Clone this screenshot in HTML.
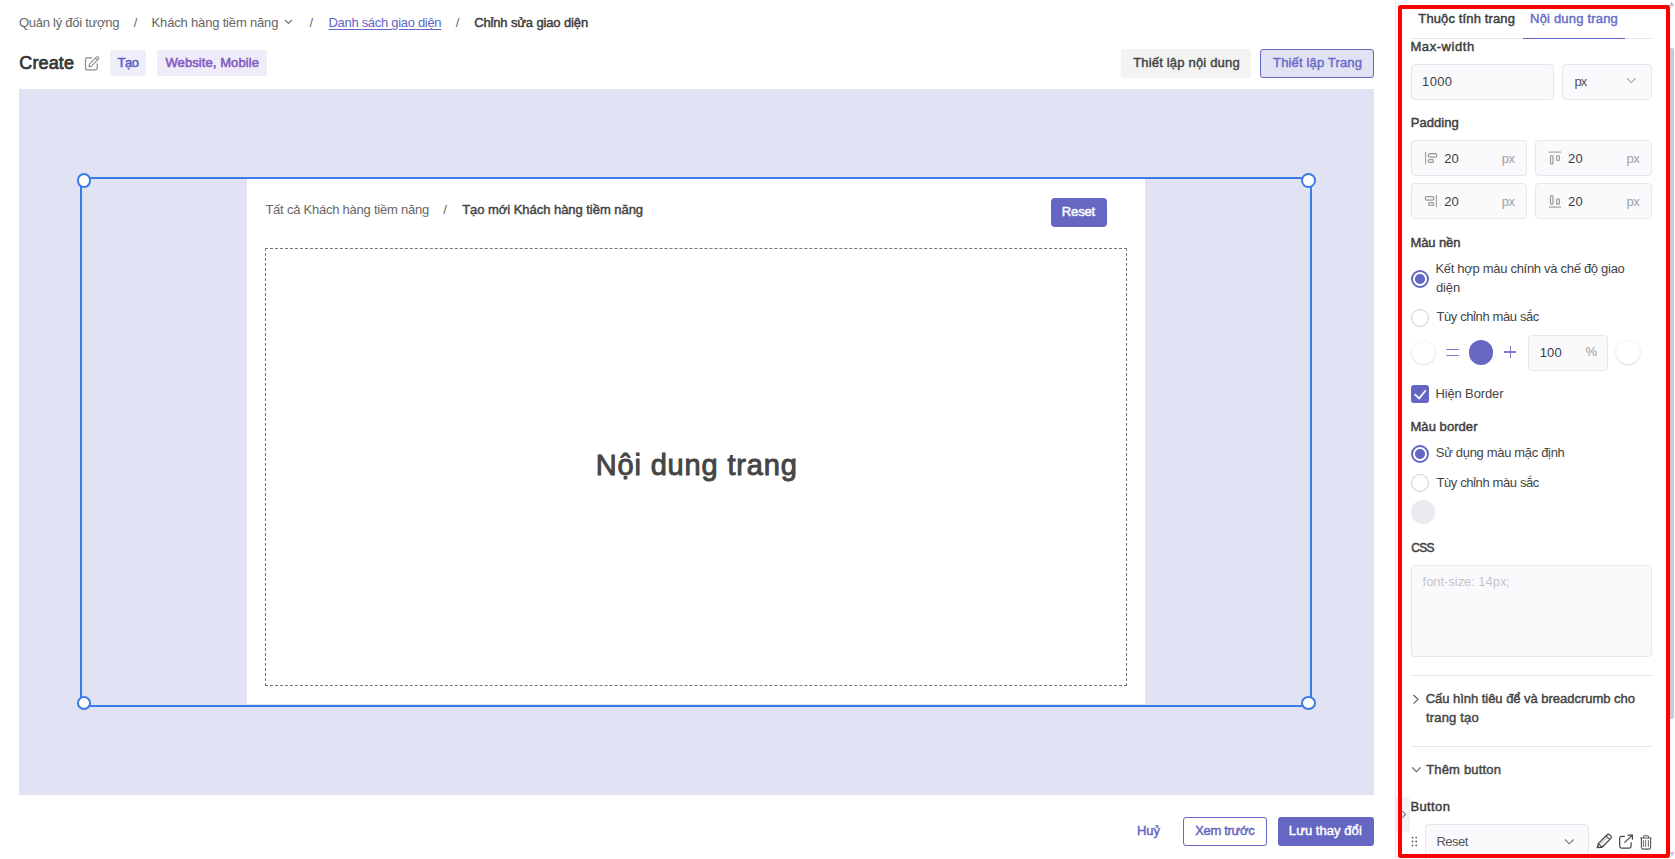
<!DOCTYPE html>
<html><head><meta charset="utf-8">
<style>
*{box-sizing:border-box;margin:0;padding:0}
html,body{width:1675px;height:859px;overflow:hidden;background:#fff}
body{position:relative;font-family:"Liberation Sans",sans-serif;color:#404040;font-size:13px}
.t{position:absolute;white-space:nowrap;line-height:1}
.s{position:absolute}
</style></head><body>
<!-- breadcrumb chevron -->
<svg class="s" style="left:284px;top:19px" width="9" height="6" viewBox="0 0 9 6"><path d="M1 1 L4.5 4.5 L8 1" fill="none" stroke="#777" stroke-width="1.2"/></svg>
<!-- edit icon -->
<svg class="s" style="left:84px;top:55px" width="17" height="17" viewBox="0 0 17 17"><path d="M8.2 2.8 H3.1 a1.6 1.6 0 0 0 -1.6 1.6 V13.2 a1.6 1.6 0 0 0 1.6 1.6 H11.6 a1.6 1.6 0 0 0 1.6 -1.6 V8.6" fill="none" stroke="#8a8a8a" stroke-width="1.2"/><path d="M4.9 11.9 L5.5 9.2 L12.5 2.2 a1.35 1.35 0 0 1 1.95 1.95 L7.5 11.2 Z M11.5 3.2 L13.45 5.15" fill="none" stroke="#8a8a8a" stroke-width="1.1" stroke-linejoin="round"/></svg>
<div class="s" style="left:110px;top:50px;width:36px;height:26px;background:#eeeef8;border-radius:3px"></div>
<div class="s" style="left:157px;top:50px;width:110px;height:26px;background:#efebf8;border-radius:3px"></div>
<div class="s" style="left:1121px;top:49px;width:130px;height:29px;background:#f3f3f3;border-radius:3px"></div>
<div class="s" style="left:1260px;top:49px;width:114px;height:29px;background:#e1e2f3;border:1px solid #6567c3;border-radius:3px"></div>
<!-- canvas -->
<div class="s" style="left:19px;top:89px;width:1355px;height:706px;background:#e1e2f3"></div>
<div class="s" style="left:247px;top:179px;width:898px;height:525px;background:#fff"></div>
<div class="s" style="left:80px;top:177px;width:1232px;height:530px;border:2px solid #3d7be6"></div>
<div class="s" style="left:76.7px;top:173.1px;width:14.3px;height:14.8px;border:2px solid #3d7be6;border-radius:50%;background:#fff"></div>
<div class="s" style="left:1301.1px;top:173.1px;width:14.8px;height:14.8px;border:2px solid #3d7be6;border-radius:50%;background:#fff"></div>
<div class="s" style="left:76.7px;top:695.9px;width:14.3px;height:14px;border:2px solid #3d7be6;border-radius:50%;background:#fff"></div>
<div class="s" style="left:1301.1px;top:695.9px;width:14.8px;height:14px;border:2px solid #3d7be6;border-radius:50%;background:#fff"></div>
<div class="s" style="left:1051px;top:198px;width:56px;height:29px;background:#6567c3;border-radius:4px"></div>
<div class="s" style="left:265px;top:248px;width:862px;height:438px;border:1px dashed #777"></div>
<!-- bottom buttons -->
<div class="s" style="left:1183px;top:817px;width:84px;height:29px;border:1px solid #6567c3;border-radius:3px"></div>
<div class="s" style="left:1278px;top:817px;width:96px;height:29px;background:#6567c3;border-radius:3px"></div>
<!-- right panel -->
<div class="s" style="left:1395px;top:0;width:1px;height:859px;background:#e8e8ee"></div>
<!-- tabs -->
<div class="s" style="left:1411px;top:38px;width:241px;height:1px;background:#e6e6ee"></div>
<div class="s" style="left:1523px;top:37.8px;width:102px;height:1.4px;background:#5f62c4"></div>
<!-- max-width -->
<div class="s" style="left:1411px;top:64px;width:143px;height:36px;background:#fafafd;border:1px solid #e6e6ee;border-radius:4px"></div>
<div class="s" style="left:1562px;top:64px;width:90px;height:36px;background:#fafafd;border:1px solid #e6e6ee;border-radius:4px"></div>
<svg class="s" style="left:1626px;top:77px" width="11" height="8" viewBox="0 0 11 8"><path d="M1 1.3 L5.2 5.6 L9.4 1.3" fill="none" stroke="#777" stroke-width="1"/></svg>
<!-- padding boxes -->
<div class="s" style="left:1411px;top:140px;width:116px;height:36px;background:#fafafd;border:1px solid #e6e6ee;border-radius:4px"></div>
<div class="s" style="left:1535px;top:140px;width:117px;height:36px;background:#fafafd;border:1px solid #e6e6ee;border-radius:4px"></div>
<div class="s" style="left:1411px;top:183px;width:116px;height:36px;background:#fafafd;border:1px solid #e6e6ee;border-radius:4px"></div>
<div class="s" style="left:1535px;top:183px;width:117px;height:36px;background:#fafafd;border:1px solid #e6e6ee;border-radius:4px"></div>
<!-- padding icons -->
<svg class="s" style="left:1423px;top:151px" width="16" height="15" viewBox="0 0 16 15"><path d="M2.6 1 V13.3" stroke="#a3a3a3" stroke-width="1.2"/><rect x="5.4" y="2.7" width="8.3" height="3.4" rx="1.2" fill="none" stroke="#999" stroke-width="1.2"/><rect x="5.4" y="8.6" width="5" height="2.8" rx="1" fill="none" stroke="#999" stroke-width="1.2"/></svg>
<svg class="s" style="left:1547px;top:151px" width="16" height="15" viewBox="0 0 16 15"><path d="M1.8 1.1 H14.1" stroke="#a3a3a3" stroke-width="1.2"/><rect x="3.5" y="4.5" width="2.5" height="8.6" rx="1" fill="none" stroke="#999" stroke-width="1.2"/><rect x="9.6" y="4.5" width="2.8" height="5" rx="1" fill="none" stroke="#999" stroke-width="1.2"/></svg>
<svg class="s" style="left:1423px;top:194px" width="16" height="15" viewBox="0 0 16 15"><path d="M13.4 1 V13.3" stroke="#a3a3a3" stroke-width="1.2"/><rect x="2.3" y="2.7" width="8.3" height="3.4" rx="1.2" fill="none" stroke="#999" stroke-width="1.2"/><rect x="5.6" y="8.6" width="5" height="2.8" rx="1" fill="none" stroke="#999" stroke-width="1.2"/></svg>
<svg class="s" style="left:1547px;top:194px" width="16" height="15" viewBox="0 0 16 15"><path d="M1.8 13.1 H14.1" stroke="#a3a3a3" stroke-width="1.2"/><rect x="3.5" y="1.6" width="2.5" height="8.6" rx="1" fill="none" stroke="#999" stroke-width="1.2"/><rect x="9.6" y="4.8" width="2.8" height="5.4" rx="1" fill="none" stroke="#999" stroke-width="1.2"/></svg>
<!-- radios mau nen -->
<div class="s" style="left:1411px;top:269.7px;width:18px;height:18px;border:2px solid #6466c4;border-radius:50%"></div>
<div class="s" style="left:1415.2px;top:274.2px;width:9.6px;height:9.6px;background:#6466c4;border-radius:50%"></div>
<div class="s" style="left:1411px;top:308.7px;width:18px;height:18px;border:1.5px solid #cfcfcf;border-radius:50%;background:#fff"></div>
<!-- color row -->
<div class="s" style="left:1411.5px;top:340.5px;width:23.5px;height:23.5px;border-radius:50%;background:#fff;box-shadow:0 0.5px 2px rgba(0,0,0,0.22)"></div>
<div class="s" style="left:1446.4px;top:348.8px;width:12.3px;height:1.4px;background:#7b7dcc;border-radius:1px"></div>
<div class="s" style="left:1446.4px;top:355px;width:12.3px;height:1.4px;background:#7b7dcc;border-radius:1px"></div>
<div class="s" style="left:1469px;top:340.3px;width:24.3px;height:24.3px;border-radius:50%;background:#6668c4"></div>
<div class="s" style="left:1504.3px;top:351.4px;width:11.8px;height:1.3px;background:#7b7dcc"></div>
<div class="s" style="left:1509.5px;top:346.2px;width:1.3px;height:11.8px;background:#7b7dcc"></div>
<div class="s" style="left:1527.5px;top:335.4px;width:80px;height:35.2px;background:#fafafd;border:1px solid #e6e6ee;border-radius:4px"></div>
<div class="s" style="left:1616.3px;top:340.5px;width:23.5px;height:23.5px;border-radius:50%;background:#fff;box-shadow:0 0.5px 2px rgba(0,0,0,0.22)"></div>
<!-- checkbox -->
<div class="s" style="left:1411px;top:385px;width:18px;height:18px;background:#6466c4;border-radius:3px"></div>
<svg class="s" style="left:1411px;top:385px" width="18" height="18" viewBox="0 0 18 18"><path d="M3.6 9.2 L8.2 13.4 L14.8 5.2" fill="none" stroke="#fff" stroke-width="1.7"/></svg>
<!-- radios mau border -->
<div class="s" style="left:1411px;top:444.7px;width:18px;height:18px;border:2px solid #6466c4;border-radius:50%"></div>
<div class="s" style="left:1415.2px;top:449.2px;width:9.6px;height:9.6px;background:#6466c4;border-radius:50%"></div>
<div class="s" style="left:1411px;top:474.1px;width:18px;height:18px;border:1.5px solid #cfcfcf;border-radius:50%;background:#fff"></div>
<div class="s" style="left:1411px;top:500px;width:24px;height:24px;border-radius:50%;background:#e9e9ef"></div>
<!-- textarea -->
<div class="s" style="left:1411px;top:565px;width:241px;height:92px;background:#fafafd;border:1px solid #e6e6ee;border-radius:4px"></div>
<!-- dividers -->
<div class="s" style="left:1411px;top:675px;width:241px;height:1px;background:#e6e6ee"></div>
<svg class="s" style="left:1412px;top:694px" width="8" height="11" viewBox="0 0 8 11"><path d="M1.5 1 L6 5.3 L1.5 9.6" fill="none" stroke="#555" stroke-width="1.1"/></svg>
<div class="s" style="left:1411px;top:746px;width:241px;height:1px;background:#e6e6ee"></div>
<svg class="s" style="left:1411px;top:766px" width="11" height="8" viewBox="0 0 11 8"><path d="M1.2 1.4 L5.4 5.8 L9.6 1.4" fill="none" stroke="#555" stroke-width="1.1"/></svg>
<!-- collapse tab -->
<div class="s" style="left:1396px;top:797px;width:14px;height:35px;background:#f2f2f3;border-radius:0 4px 4px 0"></div>
<svg class="s" style="left:1401px;top:810px" width="7" height="9" viewBox="0 0 7 9"><path d="M1.4 1.2 L4.6 4.4 L1.4 7.6" fill="none" stroke="#777" stroke-width="1.1"/></svg>
<!-- button row -->
<svg class="s" style="left:1411px;top:836px" width="7" height="11" viewBox="0 0 7 11"><circle cx="1.6" cy="1.6" r="0.9" fill="#555"/><circle cx="5.2" cy="1.6" r="0.9" fill="#555"/><circle cx="1.6" cy="5.5" r="0.9" fill="#555"/><circle cx="5.2" cy="5.5" r="0.9" fill="#555"/><circle cx="1.6" cy="9.4" r="0.9" fill="#555"/><circle cx="5.2" cy="9.4" r="0.9" fill="#555"/></svg>
<div class="s" style="left:1424.5px;top:824.3px;width:164px;height:45px;background:#fafafd;border:1px solid #e6e6ee;border-radius:4px"></div>
<svg class="s" style="left:1564px;top:838px" width="11" height="8" viewBox="0 0 11 8"><path d="M1 1.5 L5.3 5.8 L9.6 1.5" fill="none" stroke="#777" stroke-width="1.1"/></svg>
<svg class="s" style="left:1596px;top:833px" width="17" height="17" viewBox="0 0 17 17"><path d="M1.2 14.6 L2.3 10.6 L11.2 1.7 a1.6 1.6 0 0 1 2.3 0 L14.9 3.1 a1.6 1.6 0 0 1 0 2.3 L6 14.3 Z M2.3 10.6 L6 14.3 M10 2.9 L13.7 6.6" fill="none" stroke="#444" stroke-width="1.25" stroke-linejoin="round"/><path d="M4.6 10.9 L11.1 4.4" stroke="#999" stroke-width="0.8"/><path d="M1.2 14.6 L1.8 12.5 L3.3 14 Z" fill="#444"/></svg>
<svg class="s" style="left:1618px;top:834px" width="16" height="16" viewBox="0 0 16 16"><path d="M6.9 2.3 H3.5 a1.8 1.8 0 0 0 -1.8 1.8 V12.3 a1.8 1.8 0 0 0 1.8 1.8 H11.3 a1.8 1.8 0 0 0 1.8 -1.8 V8.2" fill="none" stroke="#444" stroke-width="1.2"/><path d="M6.5 8.6 L14 1.4 M9.5 1.2 H14.4 V5.7" fill="none" stroke="#444" stroke-width="1.2"/></svg>
<svg class="s" style="left:1639px;top:835px" width="14" height="16" viewBox="0 0 14 16"><path d="M1.1 3 H12.6 M4.6 2.6 V1.7 a1 1 0 0 1 1 -1 H8.6 a1 1 0 0 1 1 1 V2.6 M2.4 3.3 V12.5 a1.6 1.6 0 0 0 1.6 1.6 H10 a1.6 1.6 0 0 0 1.6 -1.6 V3.3" fill="none" stroke="#555" stroke-width="1.1"/><path d="M4.4 5.1 V11.8 M6.7 5.1 V11.8 M9.4 5.1 V11.8" stroke="#555" stroke-width="0.9"/></svg>
<!-- scrollbar -->
<div class="s" style="left:1670px;top:48px;width:4px;height:671px;background:#cbcbcb;border-radius:0 2px 2px 0"></div>
<svg class="s" style="left:1667.5px;top:1px" width="7" height="6" viewBox="0 0 7 6"><path d="M0.6 5 L3.5 0.6 L6.4 5 Z" fill="#c4c4c4"/></svg>
<svg class="s" style="left:1669px;top:851px" width="6" height="7" viewBox="0 0 6 7"><path d="M0.5 1 L3 5.5 L5.5 1 Z" fill="#c6c6c6"/></svg>

<span id="bc1" class="t" style="left:19.00px;top:16.00px;font-size:13px;font-weight:400;color:#666666;letter-spacing:-0.269px;">Quản lý đối tượng</span>
<span id="bc2" class="t" style="left:133.83px;top:16.00px;font-size:13px;font-weight:400;color:#666666;letter-spacing:0.000px;">/</span>
<span id="bc3" class="t" style="left:151.61px;top:16.00px;font-size:13px;font-weight:400;color:#666666;letter-spacing:-0.176px;">Khách hàng tiềm năng</span>
<span id="bc4" class="t" style="left:309.51px;top:16.00px;font-size:13px;font-weight:400;color:#666666;letter-spacing:0.000px;">/</span>
<span id="bc5" class="t" style="left:328.44px;top:16.00px;font-size:13px;font-weight:400;color:#6466c4;letter-spacing:-0.298px;text-decoration:underline;text-underline-offset:1.5px">Danh sách giao diện</span>
<span id="bc6" class="t" style="left:455.64px;top:16.00px;font-size:13px;font-weight:400;color:#666666;letter-spacing:0.000px;">/</span>
<span id="bc7" class="t" style="left:474.18px;top:16.00px;font-size:13px;font-weight:400;-webkit-text-stroke-width:0.45px;color:#3d3d3d;letter-spacing:-0.136px;">Chỉnh sửa giao diện</span>
<span id="title" class="t" style="left:19.34px;top:53.76px;font-size:18px;font-weight:400;-webkit-text-stroke-width:0.7px;color:#363636;letter-spacing:0.124px;">Create</span>
<span id="tag1" class="t" style="left:117.55px;top:56.00px;font-size:13px;font-weight:400;-webkit-text-stroke-width:0.55px;color:#6063c6;letter-spacing:-0.436px;">Tạo</span>
<span id="tag2" class="t" style="left:165.51px;top:56.00px;font-size:13px;font-weight:400;-webkit-text-stroke-width:0.55px;color:#8459c4;letter-spacing:0.082px;">Website, Mobile</span>
<span id="btn1" class="t" style="left:1133.15px;top:56.30px;font-size:13px;font-weight:400;-webkit-text-stroke-width:0.45px;color:#444;letter-spacing:0.185px;">Thiết lập nội dung</span>
<span id="btn2" class="t" style="left:1273.07px;top:56.30px;font-size:13px;font-weight:400;-webkit-text-stroke-width:0.45px;color:#6a6cc8;letter-spacing:0.154px;">Thiết lập Trang</span>
<span id="in1" class="t" style="left:265.41px;top:203.00px;font-size:13px;font-weight:400;color:#666666;letter-spacing:-0.231px;">Tất cả Khách hàng tiềm năng</span>
<span id="in2" class="t" style="left:443.31px;top:203.00px;font-size:13px;font-weight:400;color:#666666;letter-spacing:0.000px;">/</span>
<span id="in3" class="t" style="left:462.14px;top:203.00px;font-size:13px;font-weight:400;-webkit-text-stroke-width:0.45px;color:#444;letter-spacing:-0.037px;">Tạo mới Khách hàng tiềm năng</span>
<span id="reset" class="t" style="left:1061.85px;top:205.40px;font-size:13px;font-weight:400;-webkit-text-stroke-width:0.45px;color:#fff;letter-spacing:-0.162px;">Reset</span>
<span id="big" class="t" style="left:595.76px;top:450.95px;font-size:29px;font-weight:400;-webkit-text-stroke-width:0.95px;color:#454545;letter-spacing:0.835px;">Nội dung trang</span>
<span id="huy" class="t" style="left:1137.10px;top:824.00px;font-size:13px;font-weight:400;-webkit-text-stroke-width:0.45px;color:#6466c4;letter-spacing:-0.138px;">Huỷ</span>
<span id="xem" class="t" style="left:1195.28px;top:824.00px;font-size:13px;font-weight:400;-webkit-text-stroke-width:0.45px;color:#6466c4;letter-spacing:-0.322px;">Xem trước</span>
<span id="luu" class="t" style="left:1288.85px;top:824.00px;font-size:13px;font-weight:400;-webkit-text-stroke-width:0.45px;color:#fff;letter-spacing:0.059px;">Lưu thay đổi</span>
<span id="tab1" class="t" style="left:1418.33px;top:11.80px;font-size:13px;font-weight:400;-webkit-text-stroke-width:0.45px;color:#3d3d3d;letter-spacing:0.128px;">Thuộc tính trang</span>
<span id="tab2" class="t" style="left:1530.09px;top:11.80px;font-size:13px;font-weight:400;-webkit-text-stroke-width:0.45px;color:#6a6cc8;letter-spacing:0.186px;">Nội dung trang</span>
<span id="maxw" class="t" style="left:1410.49px;top:40.00px;font-size:13px;font-weight:400;-webkit-text-stroke-width:0.45px;color:#3d3d3d;letter-spacing:0.550px;">Max-width</span>
<span id="v1000" class="t" style="left:1422.05px;top:75.00px;font-size:13px;font-weight:400;color:#3d3d3d;letter-spacing:0.366px;">1000</span>
<span id="px0" class="t" style="left:1574.62px;top:75.00px;font-size:13px;font-weight:400;color:#555;letter-spacing:-1.000px;">px</span>
<span id="padd" class="t" style="left:1410.76px;top:116.00px;font-size:13px;font-weight:400;-webkit-text-stroke-width:0.45px;color:#3d3d3d;letter-spacing:0.040px;">Padding</span>
<span id="p1" class="t" style="left:1444.36px;top:152.00px;font-size:13px;font-weight:400;color:#3d3d3d;letter-spacing:-0.058px;">20</span>
<span id="p1u" class="t" style="left:1501.76px;top:152.00px;font-size:13px;font-weight:400;color:#a0a0a0;letter-spacing:-0.472px;">px</span>
<span id="p2" class="t" style="left:1568.07px;top:152.00px;font-size:13px;font-weight:400;color:#3d3d3d;letter-spacing:0.111px;">20</span>
<span id="p2u" class="t" style="left:1626.40px;top:152.00px;font-size:13px;font-weight:400;color:#a0a0a0;letter-spacing:-0.420px;">px</span>
<span id="p3" class="t" style="left:1444.36px;top:194.70px;font-size:13px;font-weight:400;color:#3d3d3d;letter-spacing:-0.058px;">20</span>
<span id="p3u" class="t" style="left:1501.76px;top:194.70px;font-size:13px;font-weight:400;color:#a0a0a0;letter-spacing:-0.472px;">px</span>
<span id="p4" class="t" style="left:1568.07px;top:194.70px;font-size:13px;font-weight:400;color:#3d3d3d;letter-spacing:0.111px;">20</span>
<span id="p4u" class="t" style="left:1626.40px;top:194.70px;font-size:13px;font-weight:400;color:#a0a0a0;letter-spacing:-0.420px;">px</span>
<span id="mn" class="t" style="left:1410.49px;top:236.20px;font-size:13px;font-weight:400;-webkit-text-stroke-width:0.45px;color:#3d3d3d;letter-spacing:-0.117px;">Màu nền</span>
<span id="r1a" class="t" style="left:1435.39px;top:262.00px;font-size:13px;font-weight:400;color:#444;letter-spacing:-0.296px;">Kết hợp màu chính và chế độ giao</span>
<span id="r1b" class="t" style="left:1435.93px;top:280.90px;font-size:13px;font-weight:400;color:#444;letter-spacing:-0.117px;">diện</span>
<span id="r2" class="t" style="left:1436.41px;top:310.00px;font-size:13px;font-weight:400;color:#444;letter-spacing:-0.386px;">Tùy chỉnh màu sắc</span>
<span id="v100" class="t" style="left:1539.73px;top:345.80px;font-size:13px;font-weight:400;color:#3d3d3d;letter-spacing:0.124px;">100</span>
<span id="pct" class="t" style="left:1585.40px;top:345.30px;font-size:13px;font-weight:400;color:#999;letter-spacing:0.000px;">%</span>
<span id="hb" class="t" style="left:1435.39px;top:386.60px;font-size:13px;font-weight:400;color:#444;letter-spacing:-0.125px;">Hiện Border</span>
<span id="mb" class="t" style="left:1410.49px;top:420.20px;font-size:13px;font-weight:400;-webkit-text-stroke-width:0.45px;color:#3d3d3d;letter-spacing:0.057px;">Màu border</span>
<span id="r3" class="t" style="left:1435.83px;top:446.00px;font-size:13px;font-weight:400;color:#444;letter-spacing:-0.327px;">Sử dụng màu mặc định</span>
<span id="r4" class="t" style="left:1436.41px;top:476.10px;font-size:13px;font-weight:400;color:#444;letter-spacing:-0.386px;">Tùy chỉnh màu sắc</span>
<span id="css" class="t" style="left:1411.18px;top:541.84px;font-size:12px;font-weight:400;-webkit-text-stroke-width:0.45px;color:#3d3d3d;letter-spacing:-0.698px;">CSS</span>
<span id="ph" class="t" style="left:1422.62px;top:575.00px;font-size:13px;font-weight:400;color:#c4c4c8;letter-spacing:-0.054px;">font-size: 14px;</span>
<span id="cfg1" class="t" style="left:1425.64px;top:691.90px;font-size:13px;font-weight:400;-webkit-text-stroke-width:0.45px;color:#444;letter-spacing:-0.031px;">Cấu hình tiêu để và breadcrumb cho</span>
<span id="cfg2" class="t" style="left:1426.07px;top:711.00px;font-size:13px;font-weight:400;-webkit-text-stroke-width:0.45px;color:#444;letter-spacing:0.161px;">trang tạo</span>
<span id="them" class="t" style="left:1426.14px;top:762.80px;font-size:13px;font-weight:400;-webkit-text-stroke-width:0.45px;color:#444;letter-spacing:0.188px;">Thêm button</span>
<span id="btnl" class="t" style="left:1410.43px;top:799.90px;font-size:13px;font-weight:400;-webkit-text-stroke-width:0.45px;color:#3d3d3d;letter-spacing:0.394px;">Button</span>
<span id="sel" class="t" style="left:1436.38px;top:835.00px;font-size:13px;font-weight:400;color:#555;letter-spacing:-0.491px;">Reset</span>
<div class="s" style="left:1398.3px;top:5px;width:271.4px;height:853px;border:4.1px solid #ff0000;border-radius:2.5px"></div>
</body></html>
